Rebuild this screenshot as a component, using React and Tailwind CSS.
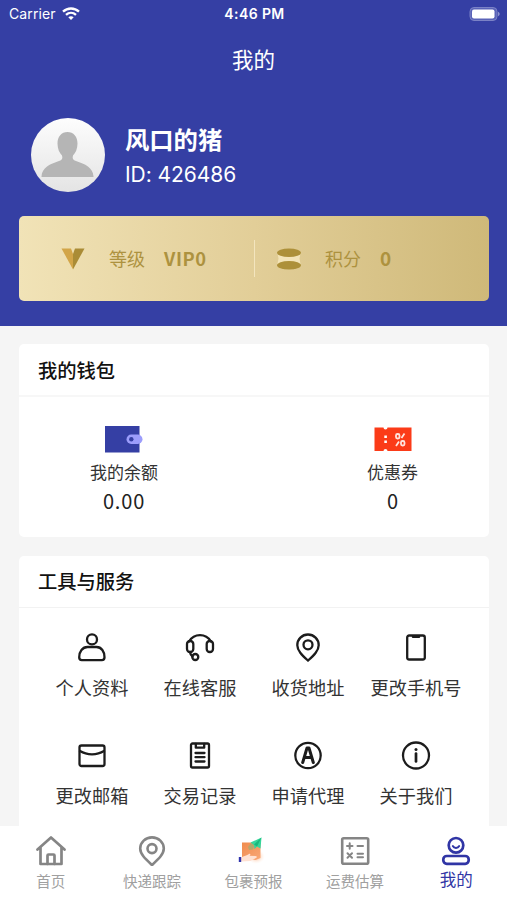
import { useState } from 'react';

// Shared svg wrapper for the line icons
const Line = ({ children, className, width = 2.3 }) => (
  <svg viewBox="0 0 30 30" className={className} fill="none" stroke="currentColor" strokeWidth={width} strokeLinejoin="round" strokeLinecap="round">
    {children}
  </svg>
);

const tools = [
  {
    label: '个人资料',
    icon: (
      <>
        <circle cx="15" cy="6.4" r="5" />
        <path d="M10.5 14h9c5 0 8 4.500 8 10.200 0 2-1 2.900-2.600 2.900H4.800c-1.600 0-2.600-.9-2.600-2.900C2.200 18.500 5.500 14 10.500 14z" />
      </>
    ),
  },
  {
    label: '在线客服',
    icon: (
      <>
        <path d="M4 8.500C6.500 4.500 10.500 2.200 15 2.200s8.500 2.300 11 6.300" />
        <rect x="2" y="8" width="6.300" height="11" rx="3" />
        <rect x="21.700" y="8" width="6.300" height="11" rx="3" />
        <path d="M5 19c.3 2.200 1 3.500 2.500 4.500" />
        <circle cx="10.300" cy="24" r="3" />
      </>
    ),
  },
  {
    label: '收货地址',
    icon: (
      <>
        <path d="M15 27.600C9.500 22.500 4.300 17.800 4.300 12.200a10.700 10.700 0 0 1 21.400 0C25.700 17.800 20.500 22.500 15 27.600z" />
        <circle cx="15" cy="11.800" r="4.500" />
      </>
    ),
  },
  {
    label: '更改手机号',
    icon: (
      <>
        <rect x="6.200" y="2.500" width="17.600" height="24" rx="2" />
        <path d="M12 3.800h6" strokeWidth="2.500" />
      </>
    ),
  },
  {
    label: '更改邮箱',
    icon: (
      <>
        <rect x="2.500" y="4.500" width="25" height="20.500" rx="2" />
        <path d="M3 10c7 4.400 17 4.400 24 0" />
      </>
    ),
  },
  {
    label: '交易记录',
    icon: (
      <>
        <rect x="6" y="2.500" width="18" height="24" rx="1.500" />
        <path d="M10.800 3v3.700h8.400V3" />
        <path d="M10.500 12h9M10.500 16.200h9M10.500 20.500h9" />
      </>
    ),
  },
  {
    label: '申请代理',
    icon: (
      <>
        <circle cx="15" cy="14.500" r="12.700" />
        <path d="M9.700 21.500 14 7h2l4.300 14.500M11.500 16.500h7" strokeWidth="3" />
      </>
    ),
  },
  {
    label: '关于我们',
    icon: (
      <>
        <circle cx="15" cy="14.500" r="13" />
        <path d="M15 12.500v8" strokeWidth="2.700" />
        <path d="M15 8.500v.1" strokeWidth="3" />
      </>
    ),
  },
];

const tabs = [
  {
    label: '首页',
    icon: (
      <Line className="w-[30px] h-[30px]" width={2.7}>
        <path d="M1.500 13.500 15 1.500l13.500 12M4.500 11.500V28h21V11.500" />
        <path d="M11.500 28v-8.500c0-.6.400-1 1-1h5c.6 0 1 .4 1 1V28" />
      </Line>
    ),
  },
  {
    label: '快递跟踪',
    icon: (
      <Line className="w-[30px] h-[30px]" width={2.6}>
        <path d="M15 29C9 23.500 3.200 18.500 3.200 12.600a11.800 11.200 0 0 1 23.600 0C26.800 18.500 21 23.500 15 29z" />
        <circle cx="15" cy="12.600" r="4.500" />
      </Line>
    ),
  },
  {
    label: '包裹预报',
    icon: (
      <svg viewBox="0 0 30 30" className="w-[30px] h-[30px]">
        <defs>
          <linearGradient id="boxFill" x1="0" y1="0" x2="1" y2="1">
            <stop offset="0" stopColor="#f08c4d" />
            <stop offset="1" stopColor="#f9a878" />
          </linearGradient>
          <radialGradient id="boxGlow">
            <stop offset="0" stopColor="#fb9f68" />
            <stop offset="1" stopColor="#fff3ea" stopOpacity="0" />
          </radialGradient>
        </defs>
        <ellipse cx="18" cy="20.500" rx="9" ry="7.500" fill="url(#boxGlow)" />
        <path d="M4 6.500h18.500V22l-5 2L4 21.500z" fill="url(#boxFill)" />
        <path d="m10 11 3-4 4 1-2 5.500-4 .5z" fill="#b8a66b" />
        <path d="M12.500 6.500 23.500 1.500l-1 11-3.500-2-2.500 2.500-.5-4z" fill="#35d69b" />
        <path d="m16 8.500 7.500-7-4.500 9z" fill="#1ab77c" />
        <path d="M3 21.500c3-2 6-1.500 8-3.500 1.500-1 2 .5.500 1.800l6 .2c2 .3 1.500 1.800 0 2.200l-5 2.800L3 25.500z" fill="#ffe1d2" />
        <path d="M.8 21h2.400v5H.8z" fill="#3034ae" />
      </svg>
    ),
  },
  {
    label: '运费估算',
    icon: (
      <Line className="w-[30px] h-[30px]" width={2.6}>
        <rect x="2.200" y="2.200" width="26" height="25.600" rx="1.500" />
        <path d="M7 10h5.500M9.700 7.200v5.600M17.500 10H23M7.500 17.200l4.500 4.600M12 17.200l-4.500 4.600M17.500 17.700H23M17.500 21.300H23" strokeWidth="2" />
      </Line>
    ),
  },
  {
    label: '我的',
    icon: (
      <Line className="w-[30px] h-[30px]" width={2.7}>
        <circle cx="15" cy="9.300" r="7.300" />
        <path d="M11.800 10c1.300 2.600 5.100 2.600 6.400 0" strokeWidth="1.900" />
        <rect x="2.300" y="20" width="25.400" height="7.800" rx="3.500" />
      </Line>
    ),
  },
];

const StatusBar = () => (
  <div className="flex h-7 items-center justify-between pl-[9px] pr-[7px] text-white">
    <div className="flex w-[150px] items-center gap-[6px]">
      <span className="text-[14px] tracking-[0.1px] leading-5">Carrier</span>
      <svg viewBox="0 0 18 14" className="w-[18px] h-[14px]" fill="none" stroke="currentColor" strokeWidth="2.300">
        <path d="M1 4.700c4.500-4.300 11.500-4.300 16 0" />
        <path d="M4 7.800c2.900-2.700 7.100-2.700 10 0" />
        <path d="M9 13 6.300 10.300c1.600-1.300 3.800-1.300 5.400 0z" fill="currentColor" stroke="none" />
      </svg>
    </div>
    <span className="text-[14px] font-semibold leading-5 tracking-[0.4px]">4:46 PM</span>
    <div className="flex w-[150px] justify-end">
      <svg viewBox="0 0 31 14" className="w-[31px] h-[14px]">
        <rect x="1" y=".5" width="27" height="13" rx="4" fill="#5a63b8" stroke="#7b82c6" />
        <rect x="3" y="2.500" width="22.500" height="9" rx="2" fill="#fff" />
        <path d="M29 4.800c2.200.8 2.200 3.600 0 4.400z" fill="#8c92ce" />
      </svg>
    </div>
  </div>
);

const Avatar = () => (
  <svg viewBox="0 0 74 74" className="w-[74px] h-[74px] shrink-0">
    <defs>
      <linearGradient id="avatarBg" x1="0" y1="0" x2="0" y2="1">
        <stop offset="0" stopColor="#fdfdfd" />
        <stop offset="1" stopColor="#e4e4e4" />
      </linearGradient>
    </defs>
    <circle cx="37" cy="37" r="37" fill="url(#avatarBg)" />
    <path d="M36.500 14c6 0 10 4.500 10 11.500 0 5.500-2 9.500-4.500 12-1 3 0 4.500 3 5.500 9 3 17 6.500 17.500 15.500V59H10.500v-.5C11 49.500 19 46 28 43c3-1 4-2.500 3-5.500-2.500-2.500-4.500-6.500-4.500-12 0-7 4-11.500 10-11.500z" fill="#b5b5b5" />
  </svg>
);

const App = () => {
  const [activeTab, setActiveTab] = useState(4);

  return (
    <div className="flex h-[900px] w-full flex-col overflow-hidden whitespace-nowrap bg-[#f5f5f5] font-[Inter,'Noto_Sans_CJK_SC',sans-serif] text-[#222]">
      {/* Blue header with profile and level card */}
      <header className="h-[326px] shrink-0 bg-[#353fa4] text-white">
        <StatusBar />
        <h1 className="h-16 text-center text-[21.5px] leading-[64px]">我的</h1>

        <div className="mt-[26px] flex h-[74px] items-center gap-5 pl-[31px]">
          <Avatar />
          <div className="flex flex-col pt-1">
            <span className="h-[35px] text-[24.3px] font-bold leading-9">风口的猪</span>
            <span className="h-9 text-[21px] leading-9 tracking-[-0.05px]">ID: 426486</span>
          </div>
        </div>

        <div className="mx-[19px] mt-6 flex h-[85px] w-[470px] items-center rounded-[5px] bg-linear-to-r from-[#f1e3b7] via-[#e2ce98] to-[#cfb979] text-[#ad923f]">
          <div className="flex w-[235px] items-center pl-[42px]">
            <svg viewBox="0 0 24 22" className="w-6 h-[22px]">
              <path d="M.5.500H10l2 5.500v15.500z" fill="#d2a548" />
              <path d="M23.500.500H14L12 6v15.500z" fill="#aa8c36" />
            </svg>
            <span className="ml-6 pt-px text-[18px]">等级</span>
            <span className="ml-[19px] pt-px text-[18.3px] font-bold tracking-[0.6px] font-['Noto_Sans_CJK_SC',sans-serif]">VIP0</span>
          </div>
          <div className="h-[37px] w-px bg-[#f3e5be]" />
          <div className="flex items-center pl-[22px]">
            <svg viewBox="0 0 24 22" className="w-6 h-[22px]">
              <path d="M.5 5h23l-1 5.500 1 5.500H.5l1-5.500z" fill="#f3e4b8" />
              <ellipse cx="12" cy="4.700" rx="12" ry="4.300" fill="#ad9039" />
              <ellipse cx="12" cy="17.300" rx="12" ry="4.300" fill="#ad9039" />
            </svg>
            <span className="ml-6 pt-px text-[18px]">积分</span>
            <span className="ml-[19px] text-[19px] font-bold font-['Noto_Sans_CJK_SC',sans-serif]">0</span>
          </div>
        </div>
      </header>

      {/* Wallet */}
      <section className="ml-[19px] mt-[18px] h-[193px] w-[470px] shrink-0 rounded-[5px] bg-white">
        <h2 className="h-[53px] border-b-2 border-[#f7f7f7] pl-[19px] text-[19.3px] font-medium leading-[54px] text-[#111]">我的钱包</h2>
        <div className="flex justify-between px-[71px] pt-[28px]">
          <div className="flex flex-col items-center">
            <svg viewBox="0 0 38 28" className="w-[38px] h-7">
              <rect x="0" y="1" width="34.500" height="26.500" fill="#353fa4" />
              <rect x="21.500" y="9.500" width="16" height="9.500" rx="4.700" fill="#9c9dfb" />
              <circle cx="26.300" cy="14.200" r="2.200" fill="#353fa4" />
            </svg>
            <span className="mt-[7px] h-[26px] text-[17px] leading-[26px] text-[#333]">我的余额</span>
            <span className="h-8 text-[20px] leading-[30px] font-['Noto_Sans_CJK_SC',sans-serif] tracking-[0.8px]">0.00</span>
          </div>
          <div className="flex flex-col items-center">
            <svg viewBox="0 0 38 28" className="w-[38px] h-7">
              <path d="M.5 2.500h9a2 2 0 0 0 4 0h24v23.500h-24a2 2 0 0 0-4 0h-9z" fill="#fb3b18" />
              <path d="M10.300 10.500h2.600v2.600h-2.600zM10.300 15.500h2.600v2.600h-2.600z" fill="#fff" />
              <g fill="none" stroke="#ffe3dc" strokeWidth="1.800">
                <rect x="22" y="9" width="3.500" height="4.500" rx="1.500" />
                <rect x="27" y="16" width="3.500" height="4.500" rx="1.500" />
                <path d="M30.500 8.500 27.500 13M25 16.500 22 21" />
              </g>
            </svg>
            <span className="mt-[7px] h-[26px] text-[17px] leading-[26px] text-[#333]">优惠券</span>
            <span className="h-8 text-[20px] leading-[30px] font-['Noto_Sans_CJK_SC',sans-serif]">0</span>
          </div>
        </div>
      </section>

      {/* Tools grid, runs under the tab bar */}
      <section className="ml-[19px] mt-[19px] min-h-0 w-[470px] flex-1 overflow-hidden rounded-t-[5px] bg-white">
        <h2 className="h-[52px] border-b border-[#f2f2f2] pl-[19px] text-[19.3px] font-medium leading-[53px] text-[#111]">工具与服务</h2>
        <div className="grid grid-cols-4 px-[19px] pt-[25px]">
          {tools.map((tool) => (
            <div key={tool.label} className="flex h-[108px] flex-col items-center">
              <Line className="w-[30px] h-[30px] text-[#1c1c1c]">{tool.icon}</Line>
              <span className="mt-[11px] text-[18.2px] leading-7 text-[#333]">{tool.label}</span>
            </div>
          ))}
        </div>
      </section>

      {/* Bottom tab bar */}
      <nav className="grid h-[74px] shrink-0 grid-cols-5 bg-white">
        {tabs.map((tab, i) => (
          <button
            key={tab.label}
            onClick={() => setActiveTab(i)}
            className={`flex flex-col items-center pt-[10px] ${i === activeTab ? 'text-[#3035a5]' : 'text-[#858585]'}`}
          >
            {tab.icon}
            <span className={i === activeTab ? 'mt-px text-[16.5px] leading-[26px]' : 'mt-1 text-[14.5px] leading-6 text-[#a0a0a0]'}>{tab.label}</span>
          </button>
        ))}
      </nav>
    </div>
  );
};

export default App;
